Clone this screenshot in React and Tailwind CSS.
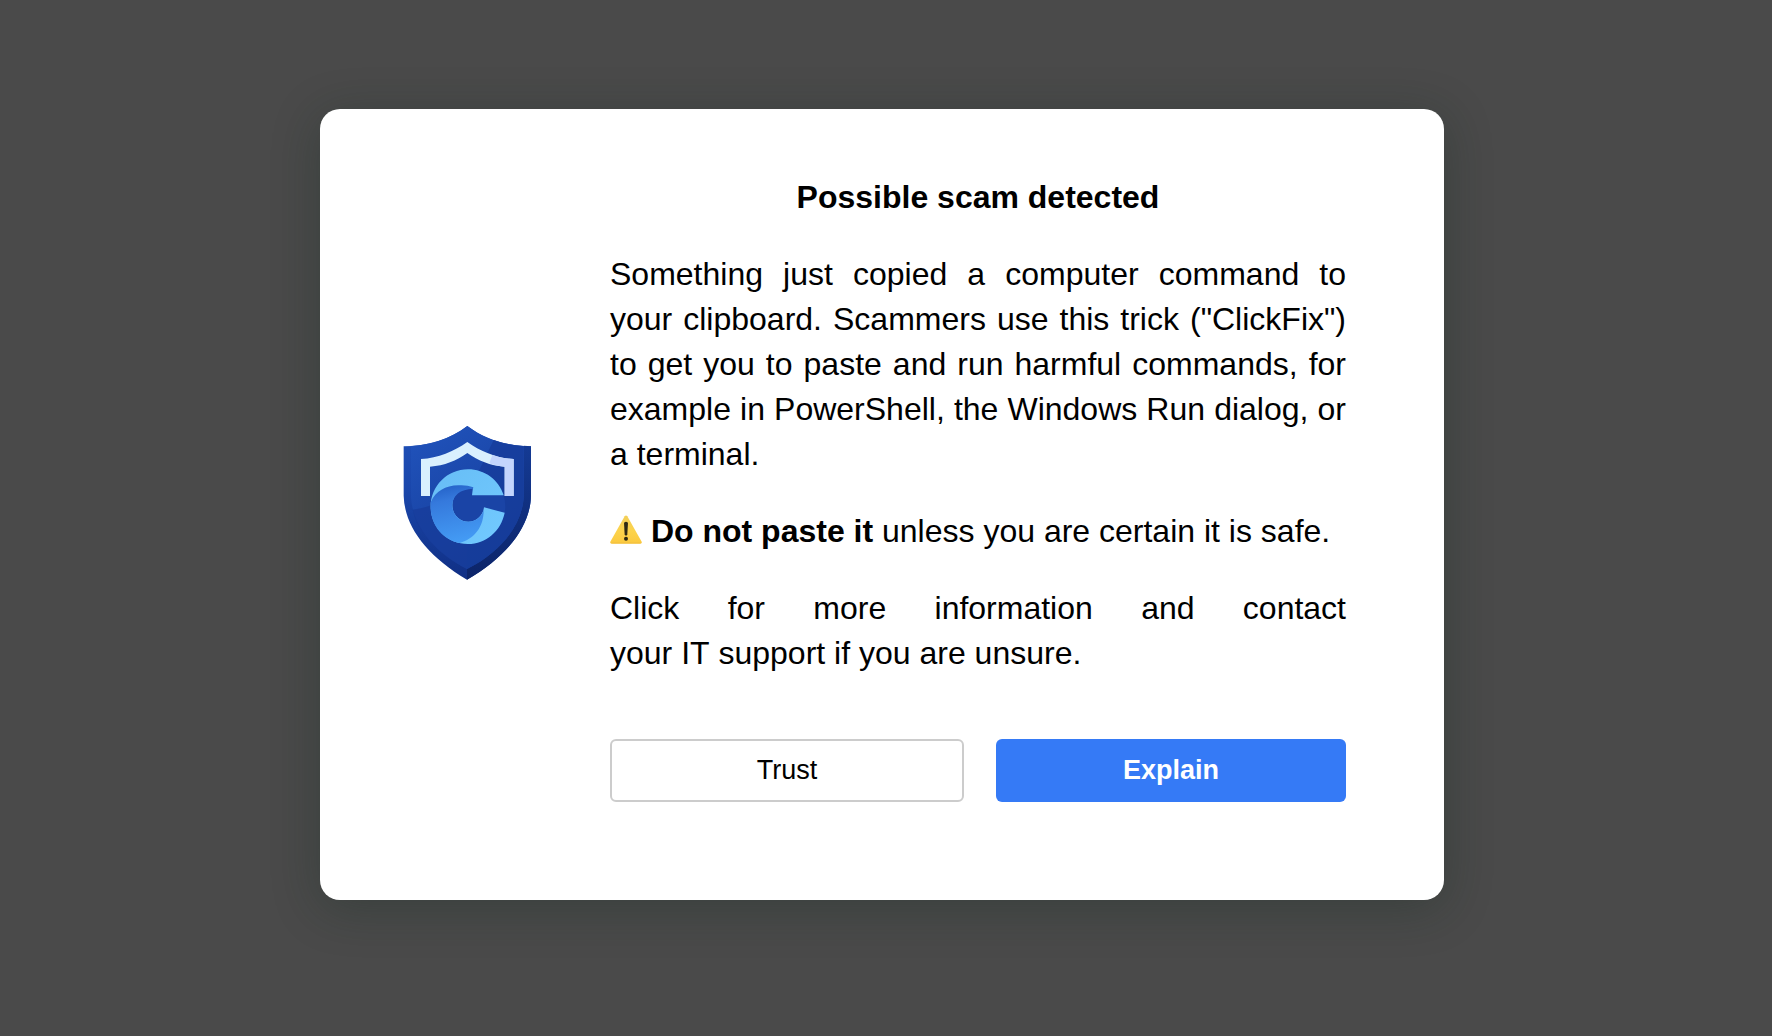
function ShieldLogo() {
  return (
    <svg viewBox="40 31 390 468" className="w-[130px] h-[156px] shrink-0" role="img" aria-label="Shield">
      <defs>
        <linearGradient id="rim" x1="0" y1="0" x2="0" y2="1">
          <stop offset="0" stopColor="#1f50b8" />
          <stop offset="0.4" stopColor="#1a47ac" />
          <stop offset="1" stopColor="#102f84" />
        </linearGradient>
        <linearGradient id="rimRight" x1="0" y1="0" x2="0" y2="1">
          <stop offset="0" stopColor="#143a94" />
          <stop offset="1" stopColor="#0c2468" />
        </linearGradient>
        <linearGradient id="field" x1="0" y1="0" x2="0.5" y2="1">
          <stop offset="0" stopColor="#2154bd" />
          <stop offset="0.5" stopColor="#1b48ab" />
          <stop offset="1" stopColor="#17409c" />
        </linearGradient>
        <linearGradient id="ring" x1="0" y1="0" x2="1" y2="1">
          <stop offset="0" stopColor="#67bdf5" />
          <stop offset="1" stopColor="#72caff" />
        </linearGradient>
        <linearGradient id="wave" x1="0.3" y1="0" x2="0.5" y2="1">
          <stop offset="0" stopColor="#2563c9" />
          <stop offset="0.25" stopColor="#3579dc" />
          <stop offset="1" stopColor="#449cf5" />
        </linearGradient>
      </defs>
      <path d="M233 31C286 71 350 91 424 92V240C422 330 356 420 232 492C110 420 44 330 42 240V92C116 91 180 71 233 31Z" fill="url(#rim)" />
      <path d="M402 90L424 92V240C422 330 356 420 232 492V460C341 405 400 320 402 240Z" fill="url(#rimRight)" />
      <path d="M233 31C284 69 337 87 402 91V240C400 320 341 405 232 460C125 405 66 320 64 240V91C129 87 182 69 233 31Z" fill="url(#field)" />
      <path d="M312 73C340 83 370 89 402 91V240C400 320 341 405 232 460V240Z" fill="#163a98" opacity="0.7" />
      <path d="M69 282C92 279 110 274 126 268L232 350V460C146 416 84 352 69 282Z" fill="#173b98" opacity="0.7" />
      <path d="M233 79C274 108 320 127 372 130V241H345V153C301 150 266 135 233 112C200 135 165 150 121 153V241H94V130C146 127 192 108 233 79Z" fill="#d9f0fe" />
      <path d="M308 118C328 125 349 129 372 130V241H345V153C328 152 313 148 299 143Z" fill="#c3d5fd" />
      <circle cx="235" cy="273" r="112" fill="#1a44a6" />
      <path d="M342 239C328 193 285 161 235 161C173 161 123 211 123 273C123 335 173 385 235 385C289 385 334 346 345 291L283 275C280 300 260 318 236 318C209 318 188 297 188 268C188 238 212 216 250 215L247 239Z" fill="url(#ring)" />
      <path d="M124 258C138 225 172 206 215 209C228 209 240 211 251 215L250 219C212 220 188 240 188 269C188 297 209 318 236 318C258 318 276 304 282 283C283 330 257 370 210 382C161 373 123 330 123 273C123 268 123 263 124 258Z" fill="url(#wave)" />
    </svg>
  );
}

function WarningIcon() {
  return (
    <svg viewBox="0 0 96 87" className="inline-block w-8 h-[29px] align-[-2px]" role="img" aria-label="Warning">
      <defs>
        <linearGradient id="warn" x1="0" y1="0" x2="0" y2="1">
          <stop offset="0" stopColor="#f3cf58" />
          <stop offset="0.55" stopColor="#fcd34c" />
          <stop offset="1" stopColor="#fbc93f" />
        </linearGradient>
      </defs>
      <path d="M44 4Q48 -1 52 4L95 80Q97 86 91 86H5Q-1 86 1 80Z" fill="url(#warn)" />
      <path d="M2 82Q2 86 6 86H90Q94 86 94 82Z" fill="#eab63c" opacity="0.4" />
      <path d="M42 25Q42 20 48 20Q54 20 54 25L52 58Q51 62 48 62Q45 62 44 58Z" fill="#2f2a14" />
      <circle cx="48" cy="71" r="6" fill="#2f2a14" />
    </svg>
  );
}

export default function App() {
  return (
    <div className="min-h-screen bg-[#4a4a4a] flex items-start justify-center pt-[109px] pr-2 pb-16 font-['Liberation_Sans',Arial,sans-serif] text-black">
      <div
        role="dialog"
        aria-labelledby="scam-title"
        className="w-full max-w-[1124px] bg-white rounded-[20px] shadow-[0_8px_48px_rgba(20,40,30,0.32)] flex items-center gap-[77px] pl-[83px] pr-[98px] pt-[66px] pb-[98px]"
      >
        <div className="self-stretch flex items-center pt-[30px]">
          <ShieldLogo />
        </div>
        <div className="flex-1 min-w-0">
          <div className="flex flex-col gap-8 text-[32px] leading-[45px] text-justify">
            <h1 id="scam-title" className="font-bold text-center">Possible scam detected</h1>
            <p>
              Something just copied a computer command to your clipboard. Scammers use this trick
              ("ClickFix") to get you to paste and run harmful commands, for example in PowerShell,
              the Windows Run dialog, or a terminal.
            </p>
            <p>
              <WarningIcon /> <strong>Do not paste it</strong> unless you are certain it is safe.
            </p>
            <p>Click for more information and contact your&nbsp;IT&nbsp;support if you are unsure.</p>
          </div>
          <div className="flex gap-8 mt-[63px] text-[27px] leading-[31px]">
            <button type="button" className="flex-1 px-4 py-[14px] bg-white border-2 border-[#cccccc] rounded-md">
              Trust
            </button>
            <button type="button" className="flex-1 px-4 py-4 bg-[#357af6] text-white font-bold rounded-md">
              Explain
            </button>
          </div>
        </div>
      </div>
    </div>
  );
}
